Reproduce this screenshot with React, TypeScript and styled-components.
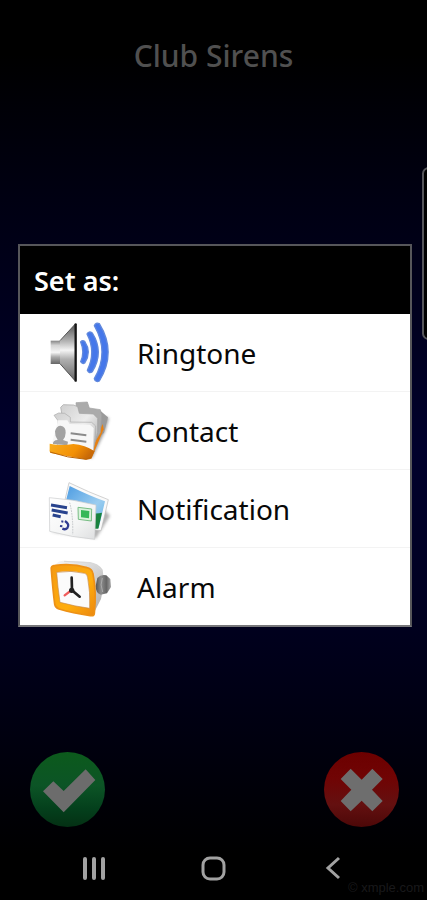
import React from "react";
import styled, { createGlobalStyle } from "styled-components";

const GlobalStyle = createGlobalStyle`
  * { box-sizing: border-box; }
  body {
    margin: 0;
    background: #000;
    font-family: "Noto Sans", "Open Sans", sans-serif;
  }
`;

const Screen = styled.div`
  position: relative;
  min-height: 100vh;
  display: flex;
  flex-direction: column;
  overflow: hidden;
  background: linear-gradient(
    #000 0%,
    #000 6%,
    #000008 13%,
    #000014 24%,
    #000020 37%,
    #00002c 50%,
    #000022 66%,
    #000014 78%,
    #000008 88%,
    #000 95%
  );
`;

const Header = styled.header`
  height: 119px;
  padding-top: 36px;
  text-align: center;
`;

const Title = styled.h1`
  margin: 0;
  font-size: 30px;
  line-height: 40px;
  font-weight: 500;
  color: #505050;
`;

const Main = styled.main`
  flex: 1;
  display: flex;
  flex-direction: column;
  justify-content: center;
  padding: 0 15px 0 18px;
`;

const Dialog = styled.section`
  border: 2px solid #56565a;
  border-bottom-color: #77777a;
  background: #fff;
`;

const DialogTitle = styled.h2`
  margin: 0;
  padding: 16px 14px 14px;
  background: #000;
  color: #fff;
  font-size: 27px;
  line-height: 38px;
  font-weight: 600;
`;

const Options = styled.ul`
  list-style: none;
  margin: 0;
  padding: 0;
`;

const Option = styled.li`
  & + & {
    border-top: 1px solid #f3f3f3;
  }
`;

const OptionButton = styled.button`
  width: 100%;
  height: 77px;
  display: flex;
  align-items: center;
  gap: 7px;
  padding: 0 10px;
  border: 0;
  background: transparent;
  color: #080808;
  font: inherit;
  font-size: 28px;
  line-height: 38px;
  text-align: left;
  cursor: pointer;
`;

const OptionIcon = styled.svg`
  flex: none;
  width: 100px;
  height: 77px;
`;

const Actions = styled.div`
  display: flex;
  justify-content: space-between;
  padding: 0 28px 0 30px;
`;

const RoundButton = styled.button<{ $tone: "green" | "red" }>`
  width: 75px;
  height: 75px;
  padding: 0;
  border: 0;
  border-radius: 50%;
  cursor: pointer;
  background: ${({ $tone }) =>
    $tone === "green"
      ? "linear-gradient(#0c5a1c, #0c5426 45%, #04401c 75%, #043014)"
      : "linear-gradient(#6c0000, #700404 35%, #641010 70%, #4c0808)"};

  svg {
    display: block;
    width: 75px;
    height: 75px;
  }
`;

const NavBar = styled.nav`
  height: 73px;
  display: grid;
  grid-template-columns: repeat(3, 1fr);
  width: 84%;
  margin: 0 auto;
  padding-top: 14px;
`;

const NavButton = styled.button`
  height: 54px;
  padding: 0;
  display: flex;
  align-items: center;
  justify-content: center;
  border: 0;
  background: transparent;
  color: #a2a2a2;
  cursor: pointer;

  svg {
    width: 30px;
    height: 30px;
  }
`;

const EdgePanel = styled.div`
  position: absolute;
  top: 167px;
  right: -8px;
  width: 13px;
  height: 173px;
  border: 2px solid #55555a;
  border-radius: 7px;
  background: #000;
`;

const Credit = styled.small`
  position: absolute;
  right: 3px;
  bottom: 3px;
  font-family: "Liberation Sans", sans-serif;
  font-size: 13px;
  line-height: 18px;
  color: #19191b;
`;

const RingtoneIcon = () => (
  <OptionIcon viewBox="0 12 300 231" aria-hidden="true">
    <defs>
      <linearGradient id="cone" x1="0" y1="0" x2="0" y2="1">
        <stop offset="0" stopColor="#555" />
        <stop offset=".3" stopColor="#b4b4b4" />
        <stop offset=".46" stopColor="#f4f4f4" />
        <stop offset=".62" stopColor="#b0b0b0" />
        <stop offset="1" stopColor="#686868" />
      </linearGradient>
      <linearGradient id="magnet" x1="0" y1="0" x2="0" y2="1">
        <stop offset="0" stopColor="#858585" />
        <stop offset=".2" stopColor="#d4d4d4" />
        <stop offset=".5" stopColor="#f6f6f6" />
        <stop offset=".7" stopColor="#aaa" />
        <stop offset="1" stopColor="#666" />
      </linearGradient>
    </defs>
    <path d="M62 92H91V162H62Z" fill="url(#magnet)" />
    <path d="M90 92L135 43V212L90 161Z" fill="url(#cone)" />
    <path d="M90 92L135 43M90 161L135 212" stroke="#555" strokeWidth="3" />
    <path d="M137 43V212" stroke="#151515" strokeWidth="7" strokeLinecap="round" />
    <g fill="#4577ea" stroke="#6088dc" strokeWidth="4" strokeLinejoin="round">
      <path d="M152 96Q157 90 164 94Q186 127 164 159Q157 163 152 155Q165 127 152 96Z" />
      <path d="M171 72Q176 62 187 69Q223 126 187 185Q177 192 172 181Q199 126 171 72Z" />
      <path d="M193 47Q197 36 208 41Q261 127 208 213Q197 218 193 206Q239 127 193 47Z" />
    </g>
  </OptionIcon>
);

const ContactIcon = () => (
  <OptionIcon viewBox="0 6 300 231" aria-hidden="true">
    <defs>
      <linearGradient id="tray" x1="0" y1="0" x2="1" y2=".3">
        <stop offset="0" stopColor="#f9ad1c" />
        <stop offset=".65" stopColor="#f39005" />
        <stop offset="1" stopColor="#c96a08" />
      </linearGradient>
      <linearGradient id="folder" x1="0" y1="0" x2="1" y2="1">
        <stop offset="0" stopColor="#cfcfcf" />
        <stop offset=".5" stopColor="#ececec" />
        <stop offset="1" stopColor="#a8a8a8" />
      </linearGradient>
      <filter id="folderShadow" x="-20%" y="-20%" width="140%" height="140%">
        <feGaussianBlur stdDeviation="4" />
      </filter>
    </defs>
    <path d="M205 77L237 84L226 122L186 205L170 200Z" fill="#777" opacity=".7" filter="url(#folderShadow)" />
    <path d="M211 62L234 82L222 128L200 150Z" fill="#9a9a9a" />
    <path d="M218 102L221 118L184 206L168 208L185 170Z" fill="#e68012" />
    <path d="M138 38L172 36L178 54L211 59L215 76L211 128L190 162L142 90Z" fill="#ababab" stroke="#a0a0a0" strokeWidth="2" />
    <path d="M92 52L100 44L131 45L143 50L148 70L190 72L203 85L203 128L190 175L102 110Z" fill="url(#folder)" stroke="#a0a0a0" strokeWidth="2" />
    <path d="M72 76L86 69L104 70L121 82L121 96L185 97L197 108L196 145L188 188L82 170L84 92Z" fill="url(#folder)" stroke="#aaa" strokeWidth="2" />
    <path d="M84 91L112 91L119 102L180 104L191 114L190 182L66 160Z" fill="#f7f7f7" />
    <path d="M69 162Q68 151 83 150Q74 137 75 124Q79 107 92 107Q108 110 107 128Q107 140 99 150L114 155L112 166Z" fill="#a2a2a2" />
    <path d="M122 130L169 136M122 149L169 155" stroke="#8b8b8b" strokeWidth="6" />
    <path d="M59 161Q92 169 130 162Q165 164 194 184L184 205Q177 210 164 208L65 190Q57 187 59 178Z" fill="url(#tray)" />
    <path d="M60 186Q112 204 168 208L184 201" fill="none" stroke="#b96408" strokeWidth="3" />
  </OptionIcon>
);

const NotificationIcon = () => (
  <OptionIcon viewBox="0 0 300 231" aria-hidden="true">
    <defs>
      <linearGradient id="sky" x1="0" y1="0" x2="1" y2="1">
        <stop offset="0" stopColor="#4d9ce2" />
        <stop offset=".6" stopColor="#9bcdf0" />
        <stop offset="1" stopColor="#64b2e5" />
      </linearGradient>
      <linearGradient id="card" x1="0" y1="0" x2="1" y2="1">
        <stop offset="0" stopColor="#fff" />
        <stop offset=".6" stopColor="#f4f5f5" />
        <stop offset="1" stopColor="#dedfe0" />
      </linearGradient>
      <filter id="cardShadow" x="-20%" y="-20%" width="140%" height="140%">
        <feGaussianBlur stdDeviation="5" />
      </filter>
    </defs>
    <path d="M214 110L240 137L198 205L60 185L190 170Z" fill="#666" opacity=".5" filter="url(#cardShadow)" />
    <path d="M117 38Q177 67 235 89L213 182L180 178L104 94Z" fill="#fafafa" stroke="#bbb" strokeWidth="2" />
    <path d="M119 48Q178 77 225 94L206 174L180 168L109 88Z" fill="url(#sky)" />
    <path d="M190 130Q205 131 216 128L205 176L188 176Z" fill="#19823e" />
    <path d="M58 83Q128 87 198 105L194 208Q126 202 59 184Z" fill="url(#card)" stroke="#c8cacc" strokeWidth="2" />
    <path d="M119 98Q130 139 128 194" fill="none" stroke="#c2c5c8" strokeWidth="3" strokeDasharray="5 3" />
    <path d="M63 105L111 113M65 120L113 129M68 135L92 140" stroke="#28438d" strokeWidth="9" />
    <path d="M105 153Q120 163 112 174Q107 180 97 176" fill="none" stroke="#303b91" strokeWidth="7" />
    <path d="M94 154L100 155M90 168L97 169" stroke="#303b91" strokeWidth="6" />
    <path d="M144 112L185 117L184 153L145 148Z" fill="#d9f2dc" stroke="#78bd84" strokeWidth="3" />
    <path d="M153 120L178 123L177 145L153 142Z" fill="#35b758" />
  </OptionIcon>
);

const AlarmIcon = () => (
  <OptionIcon viewBox="0 -6 300 231" aria-hidden="true">
    <defs>
      <linearGradient id="clockFrame" x1="0" y1="0" x2="1" y2="1">
        <stop offset="0" stopColor="#f49a12" />
        <stop offset=".6" stopColor="#ffad0c" />
        <stop offset="1" stopColor="#eb8810" />
      </linearGradient>
      <linearGradient id="clockSide" x1="0" y1="0" x2="1" y2="1">
        <stop offset="0" stopColor="#f6f6f6" />
        <stop offset=".5" stopColor="#d4d4d4" />
        <stop offset="1" stopColor="#aaa" />
      </linearGradient>
      <linearGradient id="knob">
        <stop offset="0" stopColor="#555" />
        <stop offset=".35" stopColor="#8d8d8d" />
        <stop offset=".7" stopColor="#666" />
        <stop offset="1" stopColor="#a4a4a4" />
      </linearGradient>
    </defs>
    <path d="M78 42Q85 32 101 32L179 36Q205 40 218 59Q225 98 213 147L190 192L184 60Z" fill="url(#clockSide)" />
    <path d="M102 34L180 38Q200 42 215 61" fill="none" stroke="#d9d9d9" strokeWidth="3" />
    <path d="M202 84Q213 72 229 76L241 87L243 111L231 130L212 134Q197 129 197 108Z" fill="url(#knob)" />
    <path d="M217 84Q209 104 218 126" fill="none" stroke="#aaa" strokeWidth="3" />
    <path d="M64 60Q61 47 76 46Q126 39 171 53Q187 57 189 72Q200 126 193 190Q193 199 181 197Q128 189 87 177Q76 173 74 162Q69 124 64 60Z" fill="url(#clockFrame)" stroke="#ed9117" strokeWidth="5" />
    <path d="M80 67Q124 60 164 70Q172 72 173 83Q181 125 179 175Q134 169 90 157Q83 111 80 67Z" fill="#fbfbfb" stroke="#c58a4a" strokeWidth="2" />
    <path d="M125 120L104 136" stroke="#f05b5b" strokeWidth="7" strokeLinecap="round" />
    <path d="M125 83L126 121L149 140" fill="none" stroke="#222" strokeWidth="8" strokeLinecap="round" />
    <circle cx="125" cy="121" r="8" fill="#222" />
  </OptionIcon>
);

const options = [
  { label: "Ringtone", Icon: RingtoneIcon },
  { label: "Contact", Icon: ContactIcon },
  { label: "Notification", Icon: NotificationIcon },
  { label: "Alarm", Icon: AlarmIcon },
];

export default function App() {
  return (
    <>
      <GlobalStyle />
      <Screen>
        <Header>
          <Title>Club Sirens</Title>
        </Header>
        <Main>
          <Dialog role="dialog" aria-labelledby="dialog-title">
            <DialogTitle id="dialog-title">Set as:</DialogTitle>
            <Options>
              {options.map(({ label, Icon }) => (
                <Option key={label}>
                  <OptionButton type="button">
                    <Icon />
                    {label}
                  </OptionButton>
                </Option>
              ))}
            </Options>
          </Dialog>
        </Main>
        <Actions>
          <RoundButton type="button" $tone="green" aria-label="Confirm">
            <svg viewBox="0 0 225 225" aria-hidden="true">
              <path d="M39 118L70 88L101 117L167 52L196 84L101 181Z" fill="#6c6c6c" />
            </svg>
          </RoundButton>
          <RoundButton type="button" $tone="red" aria-label="Cancel">
            <svg viewBox="0 0 225 225" aria-hidden="true">
              <path d="M50 81L80 50L113 83L145 50L176 81L144 113L176 147L145 178L113 146L80 178L50 147L82 113Z" fill="#6e6e6e" />
            </svg>
          </RoundButton>
        </Actions>
        <NavBar aria-label="System">
          <NavButton type="button" aria-label="Recent apps">
            <svg viewBox="0 0 30 30" fill="none" stroke="currentColor" strokeWidth="4" strokeLinecap="round">
              <path d="M6 6V25M15 6V25M24 6V25" />
            </svg>
          </NavButton>
          <NavButton type="button" aria-label="Home">
            <svg viewBox="0 0 30 30" fill="none" stroke="currentColor" strokeWidth="3">
              <rect x="5" y="5" width="21" height="21" rx="7" />
            </svg>
          </NavButton>
          <NavButton type="button" aria-label="Back">
            <svg viewBox="0 0 30 30" fill="none" stroke="currentColor" strokeWidth="3">
              <path d="M21 5L10 15L21 25" />
            </svg>
          </NavButton>
        </NavBar>
        <EdgePanel />
        <Credit>© xmple.com</Credit>
      </Screen>
    </>
  );
}
